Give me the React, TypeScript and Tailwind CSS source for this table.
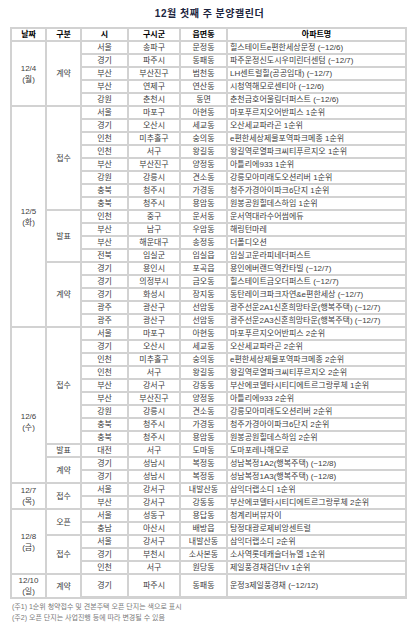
import { Fragment } from "react";

type Row = {
  si: string;
  gu: string;
  dong: string;
  apt: string;
  mark?: "yellow" | "green";
};

interface Section {
  kind: string;
  rows: Row[];
}

interface DayGroup {
  date: string;
  day: string;
  sections: Section[];
  labelClass?: string;
  tall?: boolean;
}

const r = (
  si: string,
  gu: string,
  dong: string,
  apt: string,
  mark?: "yellow" | "green"
): Row => ({ si, gu, dong, apt, mark });

const Y = "yellow" as const;
const G = "green" as const;

const days: DayGroup[] = [
  {
    date: "12/4",
    day: "(월)",
    sections: [
      {
        kind: "계약",
        rows: [
          r("서울", "송파구", "문정동", "힐스테이트e편한세상문정 (~12/6)"),
          r("경기", "파주시", "동패동", "파주운정신도시우미린더센텀 (~12/7)"),
          r("부산", "부산진구", "범천동", "LH센트럴힐(공공임대) (~12/7)"),
          r("부산", "연제구", "연산동", "시청역해모로센티아 (~12/6)"),
          r("강원", "춘천시", "동면", "춘천금호어울림더퍼스트 (~12/6)"),
        ],
      },
    ],
  },
  {
    date: "12/5",
    day: "(화)",
    sections: [
      {
        kind: "접수",
        rows: [
          r("서울", "마포구", "아현동", "마포푸르지오어반피스 1순위", Y),
          r("경기", "오산시", "세교동", "오산세교파라곤 1순위", Y),
          r("인천", "미추홀구", "숭의동", "e편한세상제물포역파크메종 1순위", Y),
          r("인천", "서구", "왕길동", "왕길역로열파크씨티푸르지오 1순위", Y),
          r("부산", "부산진구", "양정동", "아틀리에933 1순위", Y),
          r("강원", "강릉시", "견소동", "강릉모아미래도오션리버 1순위", Y),
          r("충북", "청주시", "가경동", "청주가경아이파크6단지 1순위", Y),
          r("충북", "청주시", "용암동", "원봉공원힐데스하임 1순위", Y),
        ],
      },
      {
        kind: "발표",
        rows: [
          r("인천", "중구", "운서동", "운서역대라수어썸에듀"),
          r("부산", "남구", "우암동", "해링턴마레"),
          r("부산", "해운대구", "송정동", "더폴디오션"),
          r("전북", "임실군", "임실읍", "임실고운라피네더퍼스트"),
        ],
      },
      {
        kind: "계약",
        rows: [
          r("경기", "용인시", "포곡읍", "용인에버랜드역칸타빌 (~12/7)"),
          r("경기", "의정부시", "금오동", "힐스테이트금오더퍼스트 (~12/7)"),
          r("경기", "화성시", "장지동", "동탄레이크파크자연&e편한세상 (~12/7)"),
          r("광주", "광산구", "선암동", "광주선운2A1신혼희망타운(행복주택) (~12/7)"),
          r("광주", "광산구", "선암동", "광주선운2A3신혼희망타운(행복주택) (~12/7)"),
        ],
      },
    ],
  },
  {
    date: "12/6",
    day: "(수)",
    labelClass: "pt-[34px]",
    sections: [
      {
        kind: "접수",
        rows: [
          r("서울", "마포구", "아현동", "마포푸르지오어반피스 2순위"),
          r("경기", "오산시", "세교동", "오산세교파라곤 2순위"),
          r("인천", "미추홀구", "숭의동", "e편한세상제물포역파크메종 2순위"),
          r("인천", "서구", "왕길동", "왕길역로열파크씨티푸르지오 2순위"),
          r("부산", "강서구", "강동동", "부산에코델타시티디에트르그랑루체 1순위", Y),
          r("부산", "부산진구", "양정동", "아틀리에933 2순위"),
          r("강원", "강릉시", "견소동", "강릉모아미래도오션리버 2순위"),
          r("충북", "청주시", "가경동", "청주가경아이파크6단지 2순위"),
          r("충북", "청주시", "용암동", "원봉공원힐데스하임 2순위"),
        ],
      },
      {
        kind: "발표",
        rows: [r("대전", "서구", "도마동", "도마포레나해모로")],
      },
      {
        kind: "계약",
        rows: [
          r("경기", "성남시", "복정동", "성남복정1A2(행복주택) (~12/8)"),
          r("경기", "성남시", "복정동", "성남복정1A3(행복주택) (~12/8)"),
        ],
      },
    ],
  },
  {
    date: "12/7",
    day: "(목)",
    sections: [
      {
        kind: "접수",
        rows: [
          r("서울", "강서구", "내발산동", "삼익더랩소디 1순위", Y),
          r("부산", "강서구", "강동동", "부산에코델타시티디에트르그랑루체 2순위"),
        ],
      },
    ],
  },
  {
    date: "12/8",
    day: "(금)",
    sections: [
      {
        kind: "오픈",
        rows: [
          r("서울", "성동구", "용답동", "청계리버뷰자이", G),
          r("충남", "아산시", "배방읍", "탕정대광로제비앙센트럴", G),
        ],
      },
      {
        kind: "접수",
        rows: [
          r("서울", "강서구", "내발산동", "삼익더랩소디 2순위"),
          r("경기", "부천시", "소사본동", "소사역롯데캐슬더뉴엘 1순위", Y),
          r("인천", "서구", "원당동", "제일풍경채검단IV 1순위", Y),
        ],
      },
    ],
  },
  {
    date: "12/10",
    day: "(일)",
    tall: true,
    sections: [
      {
        kind: "계약",
        rows: [r("경기", "파주시", "동패동", "운정3제일풍경채 (~12/12)")],
      },
    ],
  },
];

const spanClass: Record<number, string> = {
  1: "row-span-1",
  2: "row-span-2",
  3: "row-span-3",
  4: "row-span-4",
  5: "row-span-5",
  8: "row-span-8",
  9: "row-span-9",
  12: "row-span-12",
  17: "row-span-17",
};

const markBg = {
  yellow: "bg-[#fff0d2]",
  green: "bg-[#e2efda]",
};

const headers = ["날짜", "구분", "시", "구시군", "읍면동", "아파트명"];

const cell =
  "bg-white flex items-center justify-center text-[8px] leading-[11px] text-[#404040] whitespace-nowrap";

export default function App() {
  return (
    <div className="w-[419px] h-[629px] bg-white font-['Liberation_Sans','Noto_Sans_CJK_KR',sans-serif]">
      <h1 className="h-[27px] pt-[8px] text-center text-[10px] leading-[12px] font-bold tracking-[0.5px] text-[#1c2540]">
        12월 첫째 주 분양캘린더
      </h1>

      <div className="ml-[10px] w-[397px] grid grid-cols-[33px_33px_45px_50px_45px_177px] gap-[2px] p-[2px] bg-[#d2d2d2]">
        {headers.map((h) => (
          <div
            key={h}
            className="bg-white h-[11px] flex items-center justify-center text-[8px] leading-[11px] font-bold text-black"
          >
            {h}
          </div>
        ))}

        {days.map((d) => {
          const total = d.sections.reduce((n, s) => n + s.rows.length, 0);
          const h = d.tall ? "h-[21px]" : "h-[11px]";
          return d.sections.map((s, si) =>
            s.rows.map((row, ri) => (
              <Fragment key={`${d.date}-${si}-${ri}`}>
                {si === 0 && ri === 0 && (
                  <div
                    className={`${cell} ${spanClass[total]} flex-col ${d.labelClass ?? ""} leading-[10px]`}
                  >
                    <span>{d.date}</span>
                    <span>{d.day}</span>
                  </div>
                )}
                {ri === 0 && (
                  <div className={`${cell} ${spanClass[s.rows.length]}`}>
                    {s.kind}
                  </div>
                )}
                <div className={`${cell} ${h}`}>{row.si}</div>
                <div className={`${cell} ${h}`}>{row.gu}</div>
                <div className={`${cell} ${h}`}>{row.dong}</div>
                <div
                  className={`${cell} ${h} !justify-start pl-[2px] overflow-hidden ${
                    row.mark ? markBg[row.mark] : ""
                  }`}
                >
                  {row.apt}
                </div>
              </Fragment>
            ))
          );
        })}
      </div>

      <div className="ml-[12px] mt-[2px] text-[7px] leading-[11px] text-[#7a7a7a]">
        <p>(주1) 1순위 청약접수 및 견본주택 오픈 단지는 색으로 표시</p>
        <p>(주2) 오픈 단지는 사업진행 등에 따라 변경될 수 있음</p>
      </div>
    </div>
  );
}
